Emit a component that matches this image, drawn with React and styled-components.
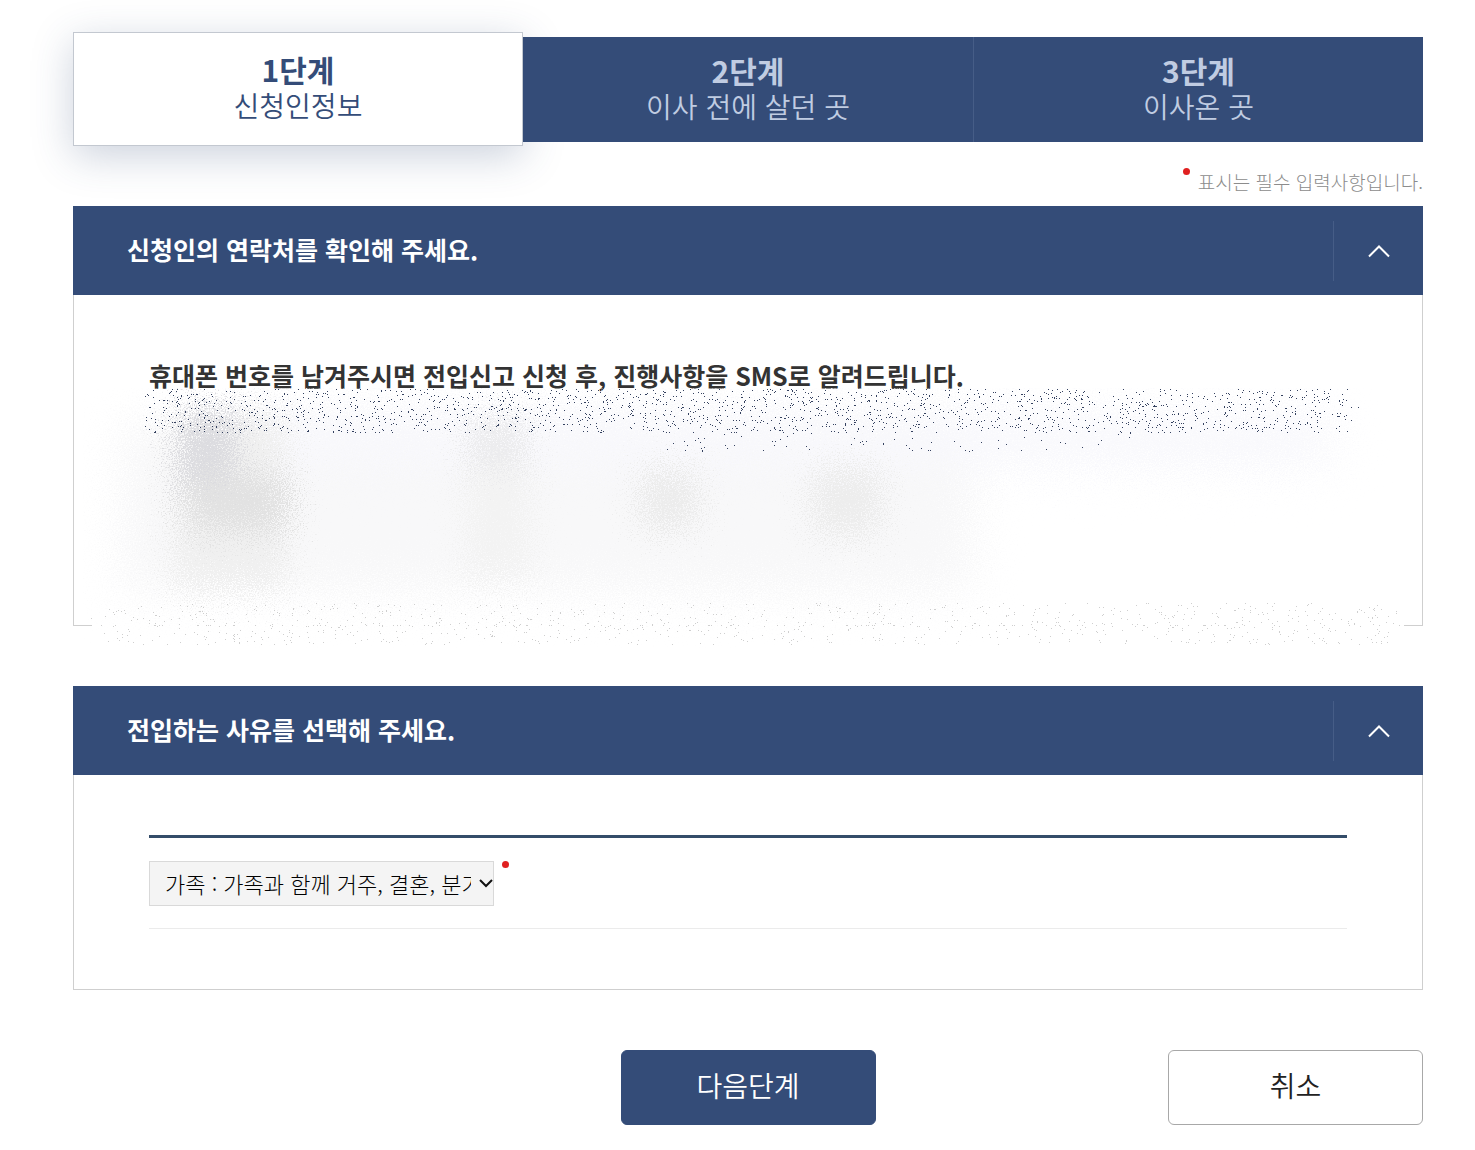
import { useState } from "react";
import styled, { createGlobalStyle } from "styled-components";

const GlobalStyle = createGlobalStyle`
  * {
    box-sizing: border-box;
  }

  body {
    margin: 0;
    background: #fff;
    color: #333;
    font-family: "Noto Sans CJK KR", "Noto Sans", sans-serif;
    font-weight: 350;
  }

  button,
  select {
    font: inherit;
  }
`;

const Page = styled.main`
  padding: 37px 52px 25px 73px;
`;

const Steps = styled.ol`
  display: grid;
  grid-template-columns: repeat(3, 1fr);
  height: 105px;
  margin: 0;
  padding: 0;
  list-style: none;
`;

const Step = styled.li`
  display: flex;
  flex-direction: column;
  align-items: center;
  justify-content: center;
  margin: ${({ $active }) => ($active ? "-5px 0 -4px" : "0")};
  padding-bottom: 4px;
  border: ${({ $active }) => ($active ? "1px solid #c3c8d0" : "0")};
  background: ${({ $active }) => ($active ? "#fff" : "#344c78")};
  color: ${({ $active }) => ($active ? "#344c78" : "#c0cce2")};
  box-shadow: ${({ $active }) =>
    $active ? "0 10px 40px rgba(52, 77, 121, 0.25)" : "none"};
  font-size: 28px;
  line-height: 36px;

  & + & + & {
    border-left: 1px solid #465d87;
  }

  &:not(:first-child) {
    position: relative;
  }

  strong {
    font-size: 30px;
    font-weight: 700;
  }
`;

const RequiredNote = styled.p`
  display: flex;
  justify-content: flex-end;
  gap: 8px;
  margin: 25px 0 9px;
  color: #8c8c8c;
  font-size: 19px;
  font-weight: 300;
  line-height: 30px;
`;

const Dot = styled.span`
  flex: none;
  width: 7px;
  height: 7px;
  margin-top: ${({ $top }) => $top || 0}px;
  border-radius: 50%;
  background: #e02020;
`;

const Section = styled.section`
  margin-bottom: 60px;
`;

const SectionHeader = styled.header`
  display: flex;
  align-items: center;
  justify-content: space-between;
  height: 89px;
  padding-left: 54px;
  background: #344c78;
  color: #fff;

  h2 {
    margin: 0;
    padding-bottom: 4px;
    font-size: 25px;
    font-weight: 700;
    line-height: 36px;
  }
`;

const ToggleButton = styled.button`
  display: flex;
  align-items: center;
  justify-content: center;
  width: 90px;
  height: 60px;
  padding: 0;
  border: 0;
  border-left: 1px solid #465d87;
  background: none;
  color: #fff;
  cursor: pointer;
`;

const SectionBody = styled.div`
  position: relative;
  min-height: ${({ $minHeight }) => $minHeight || 0}px;
  padding: 60px 75px;
  border: 1px solid #cfcfcf;
  border-top: 0;

  h3 {
    margin: 0;
    font-size: 25px;
    font-weight: 700;
    line-height: 40px;
  }
`;

const SmearLayer = styled.svg`
  position: absolute;
  top: 93px;
  left: 9px;
  width: calc(100% - 18px);
  height: 260px;
  pointer-events: none;
`;

const FieldRow = styled.div`
  display: flex;
  align-items: flex-start;
  gap: 8px;
  padding: 23px 0 22px;
  border-top: 3px solid #344d69;
  border-bottom: 1px solid #ebebeb;
`;

const SelectBox = styled.div`
  position: relative;
  width: 345px;

  svg {
    position: absolute;
    top: 17px;
    right: 1px;
    pointer-events: none;
  }
`;

const ReasonSelect = styled.select`
  display: block;
  width: 100%;
  height: 45px;
  padding: 0 22px 2px 15px;
  border: 1px solid #d9d9d9;
  border-radius: 0;
  appearance: none;
  background: #f4f4f4;
  color: #000;
  font-size: 22px;
  font-weight: 300;
  text-overflow: clip;
`;

const Actions = styled.div`
  display: grid;
  grid-template-columns: 1fr auto 1fr;
`;

const ActionButton = styled.button`
  grid-column: ${({ $primary }) => ($primary ? 2 : 3)};
  justify-self: end;
  width: 255px;
  height: 75px;
  padding: 0 0 5px;
  border: 1px solid ${({ $primary }) => ($primary ? "#344c78" : "#a8a8a8")};
  border-radius: 6px;
  background: ${({ $primary }) => ($primary ? "#344c78" : "#fff")};
  color: ${({ $primary }) => ($primary ? "#fff" : "#222")};
  font-size: 28px;
  cursor: pointer;
`;

const steps = [
  { title: "1단계", label: "신청인정보" },
  { title: "2단계", label: "이사 전에 살던 곳" },
  { title: "3단계", label: "이사온 곳" },
];

// Small seeded generator, so the grain is the same on every render
const createRandom = (seed) => () => {
  seed = (seed * 1664525 + 1013904223) % 4294967296;
  return seed / 4294967296;
};

const speckles = (seed, count, x, y, width, height) => {
  const random = createRandom(seed);
  let d = "";
  for (let i = 0; i < count; i++) {
    const px = x + Math.floor(random() * width);
    const py = y + Math.floor(random() * height);
    d += `M${px} ${py}h1v1h-1z`;
  }
  return d;
};

const inkSpeckles =
  speckles(7, 1900, 62, 1, 1205, 44) +
  speckles(19, 150, 50, 8, 1232, 36) +
  speckles(23, 70, 585, 44, 465, 20);
const lineSpeckles =
  speckles(41, 850, 18, 215, 1290, 42) +
  speckles(53, 90, 8, 237, 1320, 1) +
  speckles(67, 70, 8, 222, 1322, 36);

const blobs = [
  { x: 40, y: 35, width: 850, height: 168, fill: "#f8f8f9", blur: "wide" },
  { x: 130, y: 28, width: 1120, height: 48, fill: "#f8f8fc", blur: "wide" },
  { x: 92, y: 28, width: 110, height: 172, fill: "#f0f0f0", blur: "soft" },
  { x: 98, y: 24, width: 54, height: 82, fill: "#dcdce0", blur: "soft" },
  { x: 108, y: 88, width: 96, height: 54, fill: "#e2e2e2", blur: "soft" },
  { x: 388, y: 32, width: 54, height: 60, fill: "#ececee", blur: "soft" },
  { x: 384, y: 80, width: 62, height: 110, fill: "#f3f3f3", blur: "soft" },
  { x: 560, y: 84, width: 54, height: 56, fill: "#ececec", blur: "soft" },
  { x: 732, y: 82, width: 66, height: 64, fill: "#ededed", blur: "soft" },
];

const Smear = () => (
  <SmearLayer viewBox="0 0 1332 260" preserveAspectRatio="none" aria-hidden="true">
    <defs>
      {[
        { id: "wide", deviation: 18 },
        { id: "soft", deviation: 7 },
      ].map(({ id, deviation }) => (
        <filter
          key={id}
          id={id}
          filterUnits="userSpaceOnUse"
          x="0"
          y="0"
          width="1332"
          height="260"
          colorInterpolationFilters="sRGB"
        >
          <feGaussianBlur in="SourceGraphic" stdDeviation={deviation} result="b" />
          <feTurbulence type="fractalNoise" baseFrequency="0.73" numOctaves="3" />
          <feDisplacementMap
            in="b"
            scale="110"
            xChannelSelector="R"
            yChannelSelector="G"
          />
        </filter>
      ))}
    </defs>
    <rect x="9" y="215" width="1314" height="44" fill="#fff" />
    {blobs.map(({ blur, ...shape }) => (
      <rect key={`${shape.x}-${shape.y}`} {...shape} filter={`url(#${blur})`} />
    ))}
    <path d={inkSpeckles} fill="#34415f" shapeRendering="crispEdges" />
    <path d={lineSpeckles} fill="#cfcfcf" shapeRendering="crispEdges" />
  </SmearLayer>
);

const Panel = ({ title, minHeight, children }) => {
  const [open, setOpen] = useState(true);

  return (
    <Section>
      <SectionHeader>
        <h2>{title}</h2>
        <ToggleButton
          type="button"
          aria-label={title}
          aria-expanded={open}
          onClick={() => setOpen(!open)}
        >
          <svg width="22" height="14" viewBox="0 0 22 14" fill="none">
            <path
              d={open ? "M1 12.5 11 2.5 21 12.5" : "M1 1.5 11 11.5 21 1.5"}
              stroke="currentColor"
              strokeWidth="2"
            />
          </svg>
        </ToggleButton>
      </SectionHeader>
      {open && <SectionBody $minHeight={minHeight}>{children}</SectionBody>}
    </Section>
  );
};

const App = () => {
  const [reason, setReason] = useState("family");

  return (
    <>
      <GlobalStyle />
      <Page lang="ko">
        <Steps>
          {steps.map((step, i) => (
            <Step
              key={step.title}
              $active={i === 0}
              aria-current={i === 0 ? "step" : undefined}
            >
              <strong>{step.title}</strong>
              <span>{step.label}</span>
            </Step>
          ))}
        </Steps>
        <RequiredNote>
          <Dot $top={1} />
          표시는 필수 입력사항입니다.
        </RequiredNote>

        <Panel title="신청인의 연락처를 확인해 주세요." minHeight={331}>
          <h3>
            휴대폰 번호를 남겨주시면 전입신고 신청 후, 진행사항을 SMS로
            알려드립니다.
          </h3>
          <Smear />
        </Panel>

        <Panel title="전입하는 사유를 선택해 주세요.">
          <FieldRow>
            <SelectBox>
              <ReasonSelect
                aria-label="전입 사유"
                value={reason}
                onChange={(e) => setReason(e.target.value)}
              >
                <option value="family">
                  가족 : 가족과 함께 거주, 결혼, 분가
                </option>
              </ReasonSelect>
              <svg width="14" height="10" viewBox="0 0 14 10" fill="none">
                <path d="M1 2 7 8 13 2" stroke="#111" strokeWidth="2" />
              </svg>
            </SelectBox>
            <Dot />
          </FieldRow>
        </Panel>

        <Actions>
          <ActionButton type="button" $primary>
            다음단계
          </ActionButton>
          <ActionButton type="button">취소</ActionButton>
        </Actions>
      </Page>
    </>
  );
};

export default App;
